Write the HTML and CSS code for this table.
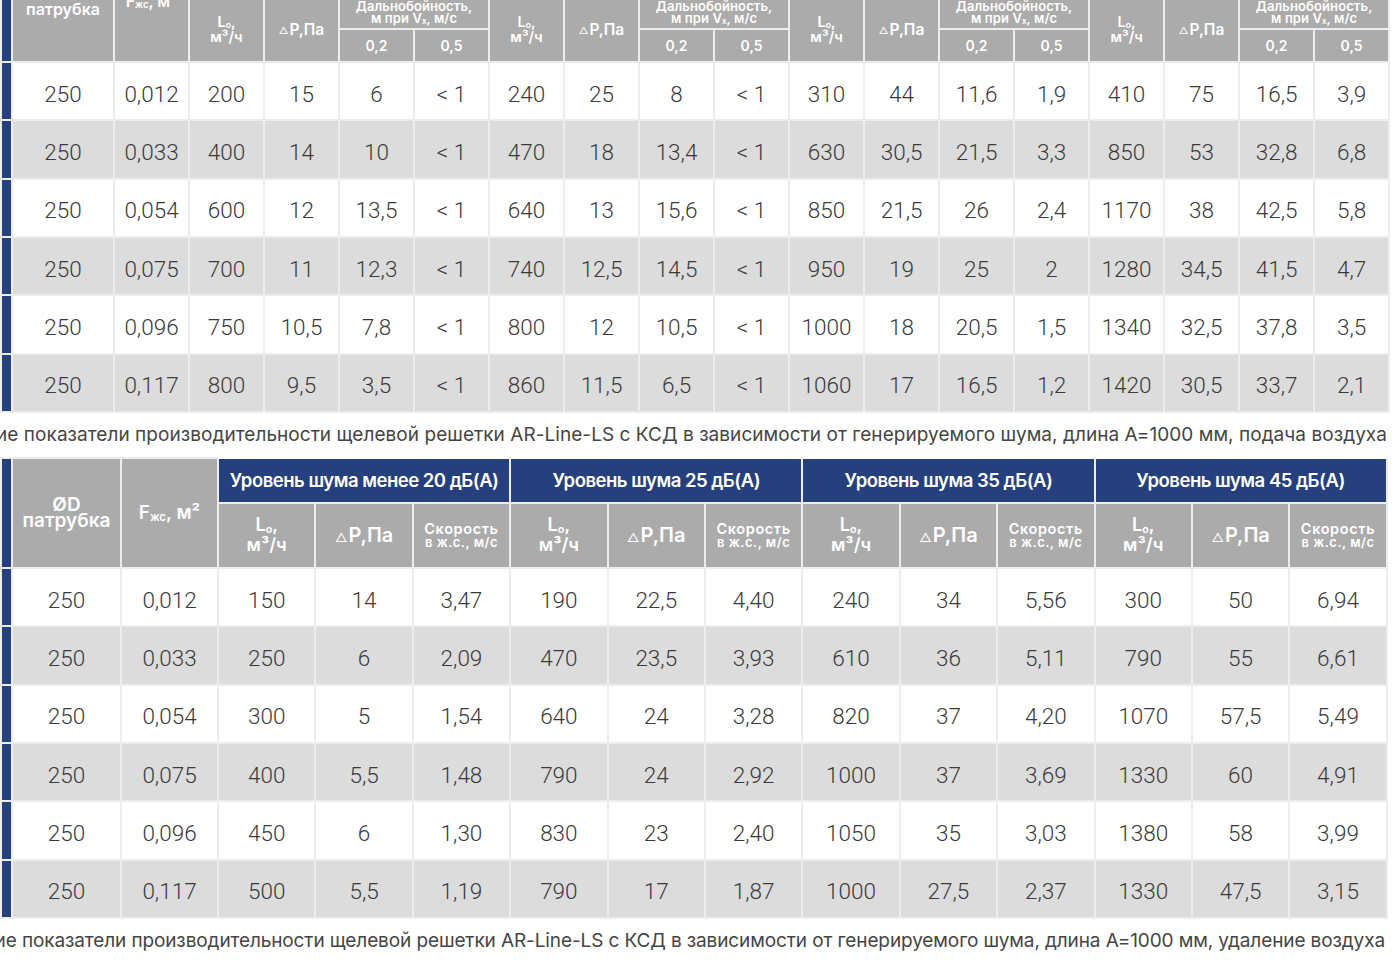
FILE: index.html
```html
<!DOCTYPE html>
<html lang="ru">
<head>
<meta charset="utf-8">
<title>AR-Line-LS</title>
<link rel="stylesheet" href="styles.css">
</head>
<body>
<div class="sheet">
  <table class="t t1">
    <colgroup>
      <col class="c-bar"><col class="c-d1"><col class="c-n1">
      <col class="c-n1"><col class="c-n1"><col class="c-n1"><col class="c-n1">
      <col class="c-n1"><col class="c-n1"><col class="c-n1"><col class="c-n1">
      <col class="c-n1"><col class="c-n1"><col class="c-n1"><col class="c-n1">
      <col class="c-n1"><col class="c-n1"><col class="c-n1"><col class="c-n1">
    </colgroup>
    <thead>
      <tr class="r-lvl1">
        <th class="bar" rowspan="3"></th>
        <th class="h-d1" rowspan="3">ØD<br>патрубка</th>
        <th class="h-f1" rowspan="3">F<sub>жс</sub>, м²</th>
        <th class="lvl" colspan="4">Уровень шума 25 дБ(А)</th>
        <th class="lvl" colspan="4">Уровень шума 30 дБ(А)</th>
        <th class="lvl" colspan="4">Уровень шума 35 дБ(А)</th>
        <th class="lvl" colspan="4">Уровень шума 40 дБ(А)</th>
      </tr>
      <tr class="r-rng">
        <th class="h-l1" rowspan="2">L<sub>o</sub>,<br>м³/ч</th>
        <th class="h-p1" rowspan="2"><span class="tri">△</span>P,Па</th>
        <th class="h-rng" colspan="2">Дальнобойность,<br>м при V<sub>x</sub>, м/с</th>
        <th class="h-l1" rowspan="2">L<sub>o</sub>,<br>м³/ч</th>
        <th class="h-p1" rowspan="2"><span class="tri">△</span>P,Па</th>
        <th class="h-rng" colspan="2">Дальнобойность,<br>м при V<sub>x</sub>, м/с</th>
        <th class="h-l1" rowspan="2">L<sub>o</sub>,<br>м³/ч</th>
        <th class="h-p1" rowspan="2"><span class="tri">△</span>P,Па</th>
        <th class="h-rng" colspan="2">Дальнобойность,<br>м при V<sub>x</sub>, м/с</th>
        <th class="h-l1" rowspan="2">L<sub>o</sub>,<br>м³/ч</th>
        <th class="h-p1" rowspan="2"><span class="tri">△</span>P,Па</th>
        <th class="h-rng" colspan="2">Дальнобойность,<br>м при V<sub>x</sub>, м/с</th>
      </tr>
      <tr class="r-v">
        <th class="h-v">0,2</th><th class="h-v">0,5</th>
        <th class="h-v">0,2</th><th class="h-v">0,5</th>
        <th class="h-v">0,2</th><th class="h-v">0,5</th>
        <th class="h-v">0,2</th><th class="h-v">0,5</th>
      </tr>
    </thead>
    <tbody>
      <tr><td class="bar"></td><td>250</td><td>0,012</td><td>200</td><td>15</td><td>6</td><td>&lt; 1</td><td>240</td><td>25</td><td>8</td><td>&lt; 1</td><td>310</td><td>44</td><td>11,6</td><td>1,9</td><td>410</td><td>75</td><td>16,5</td><td>3,9</td></tr>
      <tr><td class="bar"></td><td>250</td><td>0,033</td><td>400</td><td>14</td><td>10</td><td>&lt; 1</td><td>470</td><td>18</td><td>13,4</td><td>&lt; 1</td><td>630</td><td>30,5</td><td>21,5</td><td>3,3</td><td>850</td><td>53</td><td>32,8</td><td>6,8</td></tr>
      <tr><td class="bar"></td><td>250</td><td>0,054</td><td>600</td><td>12</td><td>13,5</td><td>&lt; 1</td><td>640</td><td>13</td><td>15,6</td><td>&lt; 1</td><td>850</td><td>21,5</td><td>26</td><td>2,4</td><td>1170</td><td>38</td><td>42,5</td><td>5,8</td></tr>
      <tr><td class="bar"></td><td>250</td><td>0,075</td><td>700</td><td>11</td><td>12,3</td><td>&lt; 1</td><td>740</td><td>12,5</td><td>14,5</td><td>&lt; 1</td><td>950</td><td>19</td><td>25</td><td>2</td><td>1280</td><td>34,5</td><td>41,5</td><td>4,7</td></tr>
      <tr><td class="bar"></td><td>250</td><td>0,096</td><td>750</td><td>10,5</td><td>7,8</td><td>&lt; 1</td><td>800</td><td>12</td><td>10,5</td><td>&lt; 1</td><td>1000</td><td>18</td><td>20,5</td><td>1,5</td><td>1340</td><td>32,5</td><td>37,8</td><td>3,5</td></tr>
      <tr><td class="bar"></td><td>250</td><td>0,117</td><td>800</td><td>9,5</td><td>3,5</td><td>&lt; 1</td><td>860</td><td>11,5</td><td>6,5</td><td>&lt; 1</td><td>1060</td><td>17</td><td>16,5</td><td>1,2</td><td>1420</td><td>30,5</td><td>33,7</td><td>2,1</td></tr>
    </tbody>
  </table>

  <div class="cap cap1"><span>Аэродинамические показатели производительности щелевой решетки AR-Line-LS с КСД в зависимости от генерируемого шума, длина A=1000 мм, подача воздуха</span></div>

  <table class="t t2">
    <colgroup>
      <col class="c-bar"><col class="c-d2"><col class="c-f2">
      <col class="c-n2"><col class="c-n2"><col class="c-n2">
      <col class="c-n2"><col class="c-n2"><col class="c-n2">
      <col class="c-n2"><col class="c-n2"><col class="c-n2">
      <col class="c-n2"><col class="c-n2"><col class="c-n2">
    </colgroup>
    <thead>
      <tr class="r-lvl2">
        <th class="bar" rowspan="2"></th>
        <th class="h-d2" rowspan="2">ØD<br>патрубка</th>
        <th class="h-f2" rowspan="2">F<sub>жс</sub>, м²</th>
        <th class="lvl" colspan="3">Уровень шума менее 20 дБ(А)</th>
        <th class="lvl" colspan="3">Уровень шума 25 дБ(А)</th>
        <th class="lvl" colspan="3">Уровень шума 35 дБ(А)</th>
        <th class="lvl" colspan="3">Уровень шума 45 дБ(А)</th>
      </tr>
      <tr class="r-sub2">
        <th class="h-l2">L<sub>o</sub>,<br>м³/ч</th><th class="h-p2"><span class="tri">△</span>P,Па</th><th class="h-s"><span class="s1">Скорость</span><br><span class="s2">в ж.с., м/с</span></th>
        <th class="h-l2">L<sub>o</sub>,<br>м³/ч</th><th class="h-p2"><span class="tri">△</span>P,Па</th><th class="h-s"><span class="s1">Скорость</span><br><span class="s2">в ж.с., м/с</span></th>
        <th class="h-l2">L<sub>o</sub>,<br>м³/ч</th><th class="h-p2"><span class="tri">△</span>P,Па</th><th class="h-s"><span class="s1">Скорость</span><br><span class="s2">в ж.с., м/с</span></th>
        <th class="h-l2">L<sub>o</sub>,<br>м³/ч</th><th class="h-p2"><span class="tri">△</span>P,Па</th><th class="h-s"><span class="s1">Скорость</span><br><span class="s2">в ж.с., м/с</span></th>
      </tr>
    </thead>
    <tbody>
      <tr><td class="bar"></td><td>250</td><td>0,012</td><td>150</td><td>14</td><td>3,47</td><td>190</td><td>22,5</td><td>4,40</td><td>240</td><td>34</td><td>5,56</td><td>300</td><td>50</td><td>6,94</td></tr>
      <tr><td class="bar"></td><td>250</td><td>0,033</td><td>250</td><td>6</td><td>2,09</td><td>470</td><td>23,5</td><td>3,93</td><td>610</td><td>36</td><td>5,11</td><td>790</td><td>55</td><td>6,61</td></tr>
      <tr><td class="bar"></td><td>250</td><td>0,054</td><td>300</td><td>5</td><td>1,54</td><td>640</td><td>24</td><td>3,28</td><td>820</td><td>37</td><td>4,20</td><td>1070</td><td>57,5</td><td>5,49</td></tr>
      <tr><td class="bar"></td><td>250</td><td>0,075</td><td>400</td><td>5,5</td><td>1,48</td><td>790</td><td>24</td><td>2,92</td><td>1000</td><td>37</td><td>3,69</td><td>1330</td><td>60</td><td>4,91</td></tr>
      <tr><td class="bar"></td><td>250</td><td>0,096</td><td>450</td><td>6</td><td>1,30</td><td>830</td><td>23</td><td>2,40</td><td>1050</td><td>35</td><td>3,03</td><td>1380</td><td>58</td><td>3,99</td></tr>
      <tr><td class="bar"></td><td>250</td><td>0,117</td><td>500</td><td>5,5</td><td>1,19</td><td>790</td><td>17</td><td>1,87</td><td>1000</td><td>27,5</td><td>2,37</td><td>1330</td><td>47,5</td><td>3,15</td></tr>
    </tbody>
  </table>

  <div class="cap cap2"><span>Аэродинамические показатели производительности щелевой решетки AR-Line-LS с КСД в зависимости от генерируемого шума, длина A=1000 мм, удаление воздуха</span></div>
</div>
</body>
</html>
```
FILE: styles.css
```css
html, body {
  margin: 0;
  padding: 0;
  background: #ffffff;
}
body {
  font-family: Inter, "Noto Sans", "Liberation Sans", sans-serif;
  overflow: hidden;
  height: 961px;
}
.sheet {
  width: 1400px;
}
.t {
  border-collapse: collapse;
  table-layout: fixed;
}
.t th,
.t td {
  border: 2px solid #ededed;
  padding: 0;
  text-align: center;
  vertical-align: middle;
  overflow: hidden;
  white-space: nowrap;
}
.t th {
  background: #ababab;
  color: #ffffff;
  font-weight: 600;
}
.t th.lvl {
  background: #263f7d;
  color: #ffffff;
  font-weight: 600;
  font-size: 18.5px;
  letter-spacing: -0.5px;
  border-top-color: #ffffff;
}
.t tbody td {
  background: #ffffff;
  color: #3a3a3a;
  font-family: Roboto, Inter, "Liberation Sans", sans-serif;
  font-weight: 300;
  font-size: 22.5px;
  padding-top: 5px;
}
.t tbody tr:nth-child(even) td {
  background: #dcdcdc;
}
.t th.bar,
.t tbody tr td.bar,
.t tbody tr:nth-child(even) td.bar {
  background: #263f7d;
}
.t sub {
  font-size: 0.6em;
  vertical-align: -0.15em;
  line-height: 0;
}
.tri {
  font-size: 0.62em;
  font-weight: 400;
  margin-right: 1px;
  vertical-align: 0.05em;
}

/* table 1 */
.t1 {
  width: 1389px;
  margin-top: -60px;
}
.t1 .c-bar { width: 11px; }
.t1 .c-d1 { width: 102px; }
.t1 .c-n1 { width: 75px; }
.t1 .r-lvl1 { height: 55px; }
.t1 .r-rng { height: 33px; }
.t1 .r-v { height: 33px; }
.t1 tbody tr { height: 58.33px; }
.h-d1 {
  font-size: 16px;
  line-height: 15px;
}
.h-f1 {
  font-size: 16px;
  line-height: 15px;
}
.h-l1 {
  font-size: 14.5px;
  line-height: 15px;
  padding-top: 2px;
}
.h-p1 {
  font-size: 15.5px;
  font-weight: 400;
}
.h-rng {
  font-size: 13px;
  font-weight: 400;
  line-height: 11.5px;
  letter-spacing: 0.1px;
}
.h-v {
  font-size: 14px;
  padding-bottom: 2px;
}

/* captions */
.cap {
  height: 44px;
  display: flex;
  justify-content: flex-end;
  align-items: center;
  overflow: hidden;
  white-space: nowrap;
  font-size: 19px;
  color: #454545;
}
.cap span {
  flex: none;
}
.cap1 {
  width: 1387px;
  letter-spacing: 0.05px;
}
.cap2 {
  width: 1385px;
  letter-spacing: -0.11px;
}

/* table 2 */
.t2 {
  width: 1386px;
}
.t2 .c-bar { width: 11px; }
.t2 .c-d2 { width: 109px; }
.t2 .c-f2 { width: 97px; }
.t2 .c-n2 { width: 97.4px; }
.t2 .r-lvl2 { height: 45px; }
.t2 .r-sub2 { height: 65px; }
.t2 tbody tr { height: 58.33px; }
.h-d2 {
  font-size: 19px;
  line-height: 16px;
  padding-bottom: 2px;
}
.h-f2 {
  font-size: 19px;
}
.h-l2 {
  font-size: 18px;
  line-height: 20px;
  padding-top: 2px;
}
.h-p2 {
  font-size: 20px;
  font-weight: 400;
}
.h-s {
  line-height: 12px;
  padding-top: 1px;
}
.h-s .s1 {
  font-size: 14.5px;
  letter-spacing: 0.6px;
}
.h-s .s2 {
  font-size: 13px;
  letter-spacing: 0.5px;
}
```
